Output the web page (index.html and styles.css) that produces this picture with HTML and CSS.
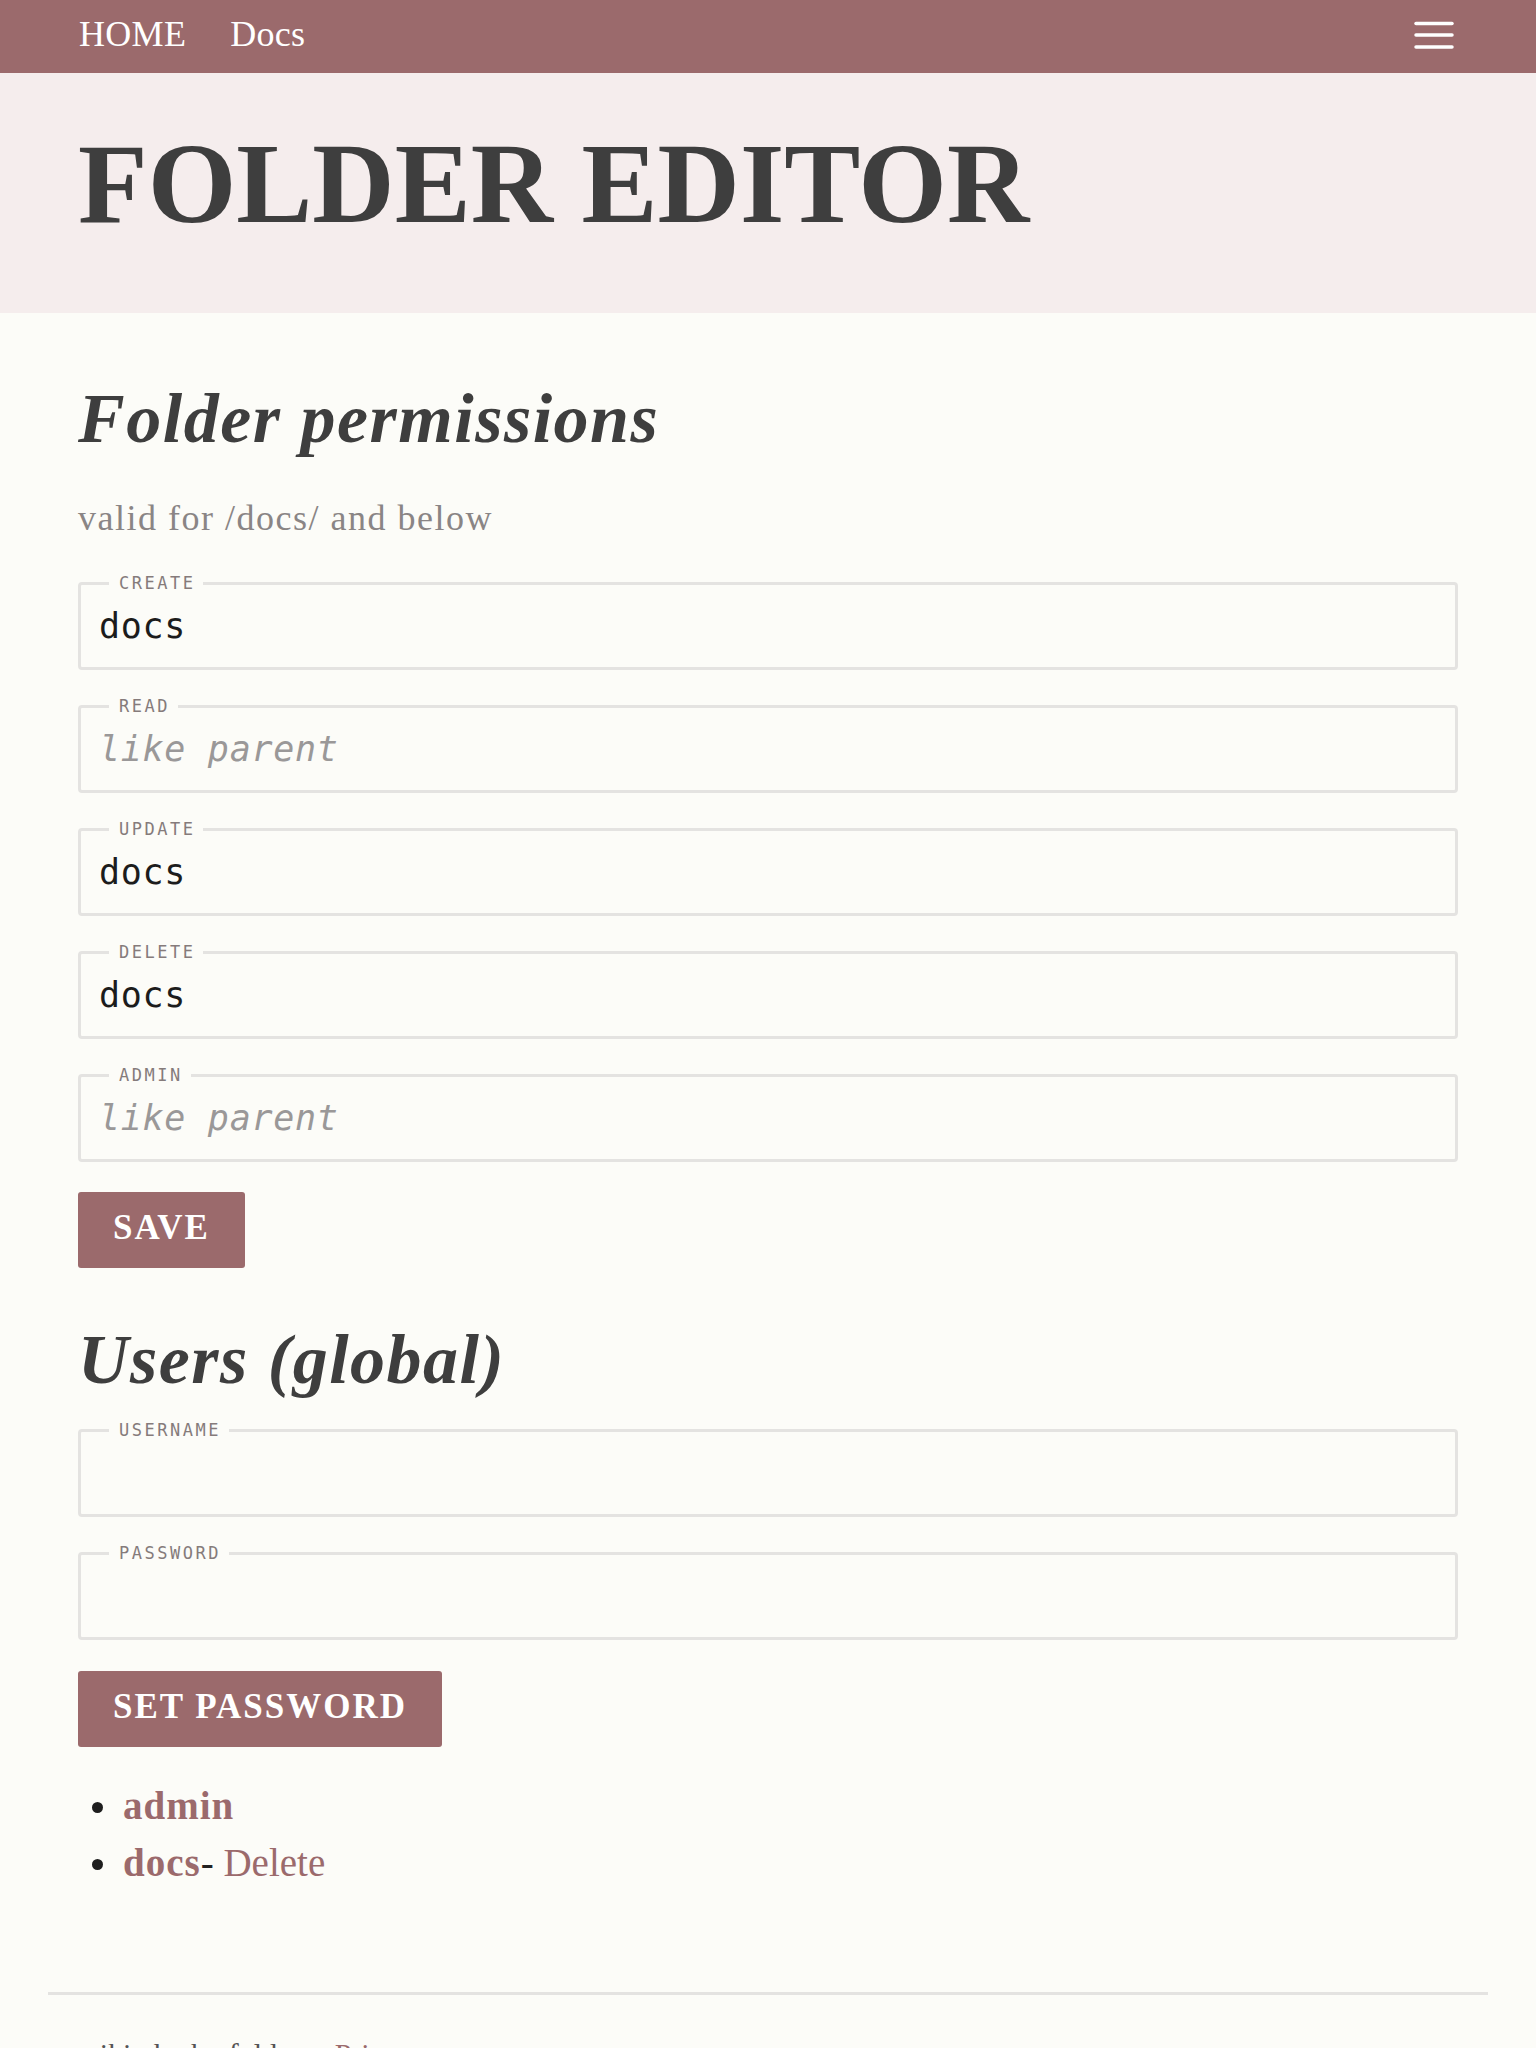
FILE: index.html
```html
<!DOCTYPE html>
<html lang="en">
<head>
<meta charset="utf-8">
<title>Folder editor</title>
<link rel="stylesheet" href="styles.css">
</head>
<body>
<nav class="topnav">
  <div class="wrap nav-inner">
    <div class="nav-links">
      <a href="#" class="nav-link">HOME</a>
      <a href="#" class="nav-link">Docs</a>
    </div>
    <button class="burger" aria-label="Menu">
      <svg width="40" height="30" viewBox="0 0 40 30"><g stroke="#fff" stroke-width="3.5" stroke-linecap="round"><line x1="2" y1="3.5" x2="38" y2="3.5"/><line x1="2" y1="15" x2="38" y2="15"/><line x1="2" y1="27" x2="38" y2="27"/></g></svg>
    </button>
  </div>
</nav>
<header class="hero">
  <div class="wrap">
    <h1 class="title">FOLDER EDITOR</h1>
  </div>
</header>
<main class="wrap main">
  <h2 class="section-title">Folder permissions</h2>
  <p class="subtitle">valid for /docs/ and below</p>
  <form class="form">
    <fieldset class="field"><legend class="field-label">Create</legend><input class="field-input" type="text" value="docs"></fieldset>
    <fieldset class="field"><legend class="field-label">Read</legend><input class="field-input" type="text" placeholder="like parent"></fieldset>
    <fieldset class="field"><legend class="field-label">Update</legend><input class="field-input" type="text" value="docs"></fieldset>
    <fieldset class="field"><legend class="field-label">Delete</legend><input class="field-input" type="text" value="docs"></fieldset>
    <fieldset class="field"><legend class="field-label">Admin</legend><input class="field-input" type="text" placeholder="like parent"></fieldset>
    <button type="button" class="btn btn-save">SAVE</button>
  </form>
  <h2 class="section-title users-title">Users (global)</h2>
  <form class="form users-form">
    <fieldset class="field"><legend class="field-label">Username</legend><input class="field-input" type="text"></fieldset>
    <fieldset class="field"><legend class="field-label">Password</legend><input class="field-input" type="password"></fieldset>
    <button type="button" class="btn btn-pass">SET PASSWORD</button>
  </form>
  <ul class="user-list">
    <li class="user-item"><a href="#" class="user-name">admin</a></li>
    <li class="user-item"><a href="#" class="user-name">docs</a>- <a href="#" class="user-del">Delete</a></li>
  </ul>
</main>
<footer class="wrap-wide footer">
  <hr class="footer-rule">
  <p class="footer-text">wiki.php by folders &nbsp; <a href="#" class="footer-link">Privacy</a></p>
</footer>
</body>
</html>
```
FILE: styles.css
```css
* { box-sizing: border-box; }
html, body { margin: 0; padding: 0; }
body {
  background: #fcfcf8;
  font-family: "Liberation Serif", "Times New Roman", serif;
  color: #222;
}
.wrap {
  max-width: 1440px;
  margin: 0 auto;
  padding: 0 30px;
}
.wrap-wide {
  max-width: 1440px;
  margin: 0 auto;
}

/* nav */
.topnav {
  background: #9b6a6c;
  height: 73px;
}
.nav-inner {
  display: flex;
  justify-content: space-between;
  align-items: flex-start;
  height: 73px;
}
.nav-links {
  display: flex;
  gap: 44px;
  padding-top: 14px;
  padding-left: 1px;
}
.nav-link {
  color: #fff;
  text-decoration: none;
  font-size: 36px;
  line-height: 40px;
  letter-spacing: 0.3px;
}
.burger {
  background: none;
  border: none;
  padding: 0;
  margin: 20px 4px 0 0;
  width: 40px;
  height: 30px;
  display: block;
}
.burger svg { display: block; }

/* hero */
.hero {
  background: #f5eded;
  padding: 54px 0 72px;
}
.title {
  margin: 0;
  font-size: 114px;
  line-height: 114px;
  font-weight: 700;
  color: #3e3e3e;
}

/* main */
.main {
  padding-top: 64px;
}
.section-title {
  margin: 0;
  font-size: 70px;
  line-height: 84px;
  font-style: italic;
  font-weight: 700;
  letter-spacing: 1.5px;
  color: #3e3e3e;
}
.subtitle {
  margin: 30px 0 28px;
  font-size: 36px;
  line-height: 54px;
  letter-spacing: 1.5px;
  color: #8a8585;
}
.form { margin: 0; }
.field {
  margin: 0 0 26px;
  padding: 0 0 0 16px;
  border: 3px solid #e4e3e1;
  border-radius: 4px;
  min-width: 0;
}
.field-label {
  margin-left: 12px;
  padding: 0 8px 0 10px;
  font-family: "DejaVu Sans Mono", "Liberation Mono", monospace;
  font-size: 17px;
  line-height: 20px;
  letter-spacing: 2.5px;
  text-transform: uppercase;
  color: #857b7b;
}
.field-input {
  display: block;
  width: 100%;
  height: 40px;
  box-sizing: content-box;
  padding: 13px 3px 21px 2px;
  border: none;
  outline: none;
  background: transparent;
  font-family: "DejaVu Sans Mono", "Liberation Mono", monospace;
  font-size: 35px;
  line-height: 40px;
  letter-spacing: 0.7px;
  color: #1c1c1c;
}
.field-input::placeholder {
  font-style: italic;
  color: #9a9898;
}
.btn {
  display: block;
  height: 76px;
  padding: 0 35px 5px;
  border: none;
  border-radius: 3px;
  background: #9b6a6c;
  color: #fff;
  font-family: "Liberation Serif", "Times New Roman", serif;
  font-weight: 700;
  font-size: 35px;
  line-height: 71px;
  letter-spacing: 2px;
}
.btn-save { margin-top: 30px; }
.users-title { margin-top: 50px; }
.users-form { margin-top: 18px; }
.btn-pass { margin-top: 31px; }

/* list */
.user-list {
  list-style: none;
  margin: 30px 0 0;
  padding: 0 0 0 14px;
}
.user-item {
  font-size: 39px;
  line-height: 57px;
  color: #222;
}
.user-item::before {
  content: "";
  display: inline-block;
  width: 11px;
  height: 11px;
  border-radius: 50%;
  background: #1e1e1e;
  margin-right: 20px;
  vertical-align: 6px;
}
.user-name {
  color: #9b6a6c;
  font-weight: 700;
  letter-spacing: 1px;
  text-decoration: none;
}
.user-del {
  color: #9b6a6c;
  text-decoration: none;
}

/* footer */
.footer {
  margin-top: 101px;
}
.footer-rule {
  margin: 0;
  border: none;
  border-top: 3px solid #e4e3e1;
  height: 0;
}
.footer-text {
  margin: 36px 0 0;
  padding: 0 30px;
  font-size: 30px;
  line-height: 45px;
  color: #555;
}
.footer-link {
  color: #9b6a6c;
  text-decoration: none;
}
```
